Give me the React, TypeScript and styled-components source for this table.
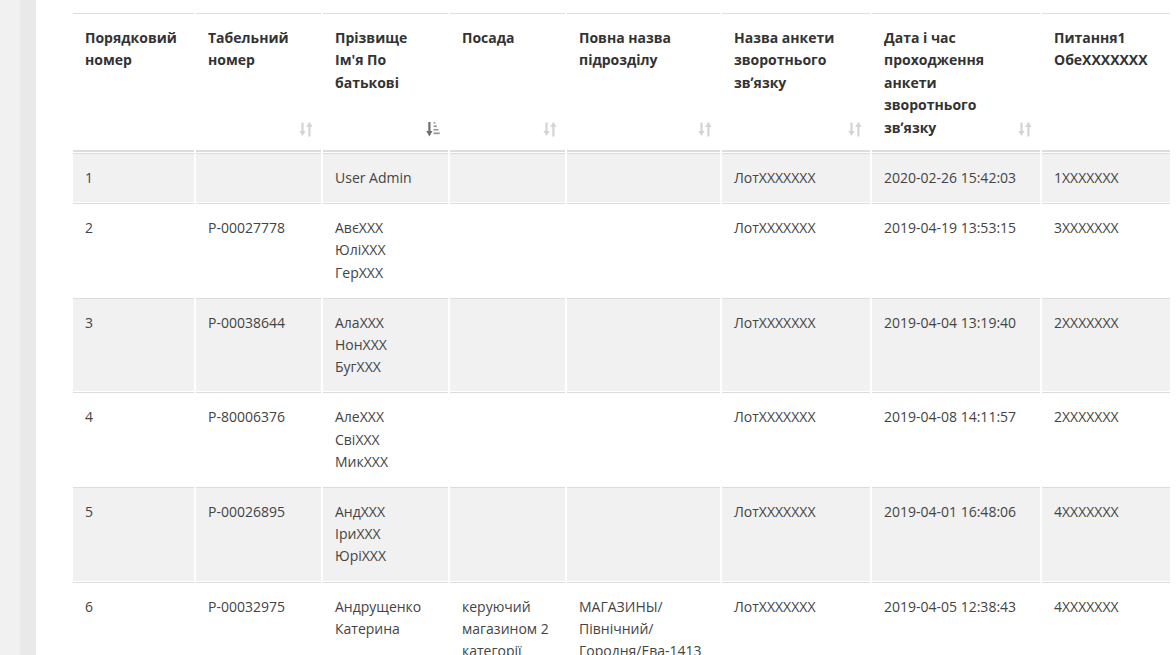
import React from "react";
import styled, { createGlobalStyle } from "styled-components";

const GlobalStyle = createGlobalStyle`
  html, body {
    margin: 0;
    padding: 0;
    background: #ffffff;
    overflow: hidden;
  }
  body {
    font-family: "Open Sans", "Noto Sans", sans-serif;
    font-size: 14px;
    color: #333333;
  }
`;

const Page = styled.div`
  display: flex;
  height: 100vh;
  width: 100vw;
  overflow: hidden;
`;

const SideStrip = styled.div`
  flex: 0 0 20px;
  background: #f1f1f1;
`;

const Rail = styled.div`
  flex: 0 0 16px;
  background: #e9e9e9;
`;

const Content = styled.main`
  flex: 1;
  padding: 12px 0 0 35px;
  min-width: 0;
`;

const Table = styled.table`
  border-collapse: separate;
  border-spacing: 2px 1px;
  table-layout: fixed;
  width: 1101px;
`;

const HeadCell = styled.th`
  position: relative;
  text-align: left;
  vertical-align: top;
  font-weight: 700;
  color: #333333;
  line-height: 1.6;
  padding: 13px 12px 11px;
  border-top: 1px solid #dddddd;
  border-bottom: 2px solid #dddddd;
  background: #ffffff;
`;

const Cell = styled.td<{ $striped: boolean }>`
  vertical-align: top;
  text-align: left;
  color: #444444;
  line-height: 22.2px;
  padding: 13px 12px;
  border-top: 1px solid #dddddd;
  background: ${(p) => (p.$striped ? "#f1f1f1" : "#ffffff")};
`;

const Line = styled.span`
  display: block;
`;

const SortBadge = styled.span`
  position: absolute;
  right: 8px;
  bottom: 13px;
  width: 14px;
  height: 16px;
  display: block;
`;

type SortState = "none" | "idle" | "asc";

const SortIcon: React.FC<{ state: SortState }> = ({ state }) => {
  if (state === "none") return null;
  if (state === "asc") {
    return (
      <SortBadge>
        <svg width="14" height="16" viewBox="0 0 14 16">
          <rect x="2.3" y="1" width="2.2" height="10" fill="#6f6f6f" />
          <polygon points="0.3,10 6.5,10 3.4,15.5" fill="#6f6f6f" />
          <rect x="7.5" y="1" width="1.8" height="1.6" fill="#9a9a9a" />
          <rect x="7.5" y="4.4" width="3.4" height="1.7" fill="#9a9a9a" />
          <rect x="7.5" y="7.9" width="4.8" height="1.7" fill="#9a9a9a" />
          <rect x="7.5" y="11.4" width="6.3" height="1.8" fill="#9a9a9a" />
        </svg>
      </SortBadge>
    );
  }
  return (
    <SortBadge>
      <svg width="14" height="16" viewBox="0 0 14 16">
        <rect x="2.4" y="1.5" width="2.2" height="9.5" fill="#d4d4d4" />
        <polygon points="0.4,10 6.6,10 3.5,15" fill="#d4d4d4" />
        <polygon points="7.2,6 13.6,6 10.4,0.8" fill="#d4d4d4" />
        <rect x="9.3" y="5" width="2.2" height="10.5" fill="#d4d4d4" />
      </svg>
    </SortBadge>
  );
};

type Column = { width: number; title: string[]; sort: SortState };

const columns: Column[] = [
  { width: 121, title: ["Порядковий", "номер"], sort: "none" },
  { width: 125, title: ["Табельний", "номер"], sort: "idle" },
  { width: 125, title: ["Прізвище", "Ім'я По", "батькові"], sort: "asc" },
  { width: 115, title: ["Посада"], sort: "idle" },
  { width: 153, title: ["Повна назва", "підрозділу"], sort: "idle" },
  { width: 148, title: ["Назва анкети", "зворотнього", "звʼязку"], sort: "idle" },
  {
    width: 168,
    title: ["Дата і час", "проходження", "анкети", "зворотнього", "звʼязку"],
    sort: "idle",
  },
  { width: 128, title: ["Питання1", "ОбеXXXXXXX"], sort: "none" },
];

type RowData = string[][];

const rows: RowData[] = [
  [["1"], [], ["User Admin"], [], [], ["ЛотXXXXXXX"], ["2020-02-26 15:42:03"], ["1XXXXXXX"]],
  [
    ["2"],
    ["P-00027778"],
    ["АвєXXX", "ЮліXXX", "ГерXXX"],
    [],
    [],
    ["ЛотXXXXXXX"],
    ["2019-04-19 13:53:15"],
    ["3XXXXXXX"],
  ],
  [
    ["3"],
    ["P-00038644"],
    ["АлаXXX", "НонXXX", "БугXXX"],
    [],
    [],
    ["ЛотXXXXXXX"],
    ["2019-04-04 13:19:40"],
    ["2XXXXXXX"],
  ],
  [
    ["4"],
    ["P-80006376"],
    ["АлеXXX", "СвіXXX", "МикXXX"],
    [],
    [],
    ["ЛотXXXXXXX"],
    ["2019-04-08 14:11:57"],
    ["2XXXXXXX"],
  ],
  [
    ["5"],
    ["P-00026895"],
    ["АндXXX", "ІриXXX", "ЮріXXX"],
    [],
    [],
    ["ЛотXXXXXXX"],
    ["2019-04-01 16:48:06"],
    ["4XXXXXXX"],
  ],
  [
    ["6"],
    ["P-00032975"],
    ["Андрущенко", "Катерина"],
    ["керуючий", "магазином 2", "категорії"],
    ["МАГАЗИНЫ/", "Північний/", "Городня/Ева-1413"],
    ["ЛотXXXXXXX"],
    ["2019-04-05 12:38:43"],
    ["4XXXXXXX"],
  ],
];

export default function App() {
  return (
    <>
      <GlobalStyle />
      <Page>
        <SideStrip />
        <Rail />
        <Content>
          <Table>
            <colgroup>
              {columns.map((c, i) => (
                <col key={i} style={{ width: c.width }} />
              ))}
            </colgroup>
            <thead>
              <tr>
                {columns.map((c, i) => (
                  <HeadCell key={i}>
                    {c.title.map((t, j) => (
                      <Line key={j}>{t}</Line>
                    ))}
                    <SortIcon state={c.sort} />
                  </HeadCell>
                ))}
              </tr>
            </thead>
            <tbody>
              {rows.map((r, ri) => (
                <tr key={ri}>
                  {r.map((cell, ci) => (
                    <Cell key={ci} $striped={ri % 2 === 0}>
                      {cell.map((t, j) => (
                        <Line key={j}>{t}</Line>
                      ))}
                    </Cell>
                  ))}
                </tr>
              ))}
            </tbody>
          </Table>
        </Content>
      </Page>
    </>
  );
}
